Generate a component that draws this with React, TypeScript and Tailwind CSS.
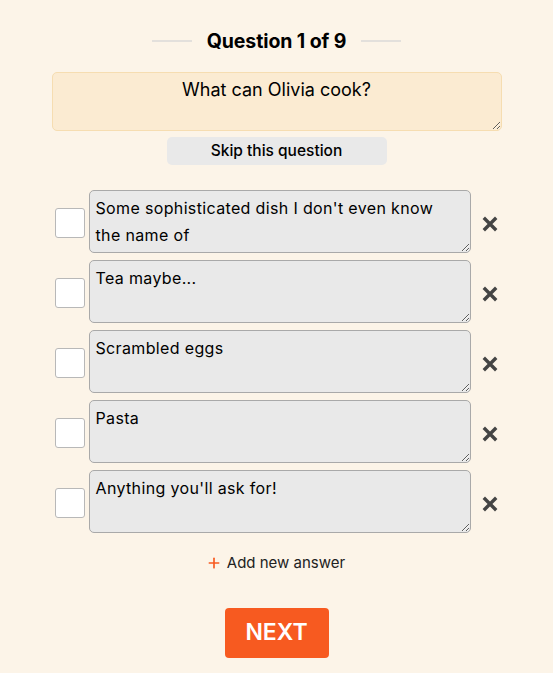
import { Plus } from "lucide-react";

const answers = [
  "Some sophisticated dish I don't even know the name of",
  "Tea maybe...",
  "Scrambled eggs",
  "Pasta",
  "Anything you'll ask for!",
];

const App = () => {
  return (
    <div
      className="min-h-screen w-full bg-[#fcf4e8] text-black"
      style={{ fontFamily: "Inter, 'Noto Sans', sans-serif" }}
    >
      <div className="mx-auto flex w-[450px] flex-col items-center pt-[29px]">
        {/* Header */}
        <div className="flex items-center gap-[15px]">
          <div className="h-[2px] w-[40px] bg-[#e3e0dc]"></div>
          <h1 className="text-[19.5px] font-bold leading-[24px] tracking-[-0.1px]">Question 1 of 9</h1>
          <div className="h-[2px] w-[40px] bg-[#e3e0dc]"></div>
        </div>

        {/* Question */}
        <textarea
          defaultValue="What can Olivia cook?"
          className="mt-[19px] h-[59px] w-full resize-y rounded-[5px] border border-[#f6ddb1] bg-[#fbebd2] px-3 pt-[5px] text-center text-[18px] leading-[24px] outline-none"
        />

        <button className="mt-[6px] h-[28px] w-[220px] rounded-[5px] bg-[#e9e9e9] text-[15.5px] font-medium">
          Skip this question
        </button>

        {/* Answers */}
        <div className="mt-[25px] flex w-full flex-col gap-[7px]">
          {answers.map((a, i) => (
            <div key={i} className="flex items-center">
              <div className="ml-[3px] mt-[3px] h-[30px] w-[30px] shrink-0 rounded-[3px] border border-[#b8b8b8] bg-white"></div>
              <textarea
                defaultValue={a}
                className="ml-[4px] h-[63px] w-[382px] resize-y rounded-[5px] border border-[#a9a9a9] bg-[#e9e9e9] pl-[6px] pr-[16px] pt-[4px] text-[16px] leading-[27px] tracking-[0.35px] outline-none"
              />
              <svg viewBox="0 0 16 16" className="ml-[11px] mt-[4px] h-[16px] w-[16px] text-[#444]" fill="none">
                <path d="M3 3L13 13M13 3L3 13" stroke="currentColor" strokeWidth="3.4" strokeLinecap="square" />
              </svg>
            </div>
          ))}
        </div>

        <button className="mt-[19px] -ml-[2px] flex items-center gap-[5px] text-[15px] text-[#222]">
          <Plus className="h-[16px] w-[16px] text-[#f75a20]" strokeWidth={2.5} />
          Add new answer
        </button>

        <button className="mt-[33px] h-[50px] w-[104px] rounded-[4px] bg-[#f75a20] text-[23px] font-semibold text-white">
          NEXT
        </button>
      </div>
    </div>
  );
};

export default App;
